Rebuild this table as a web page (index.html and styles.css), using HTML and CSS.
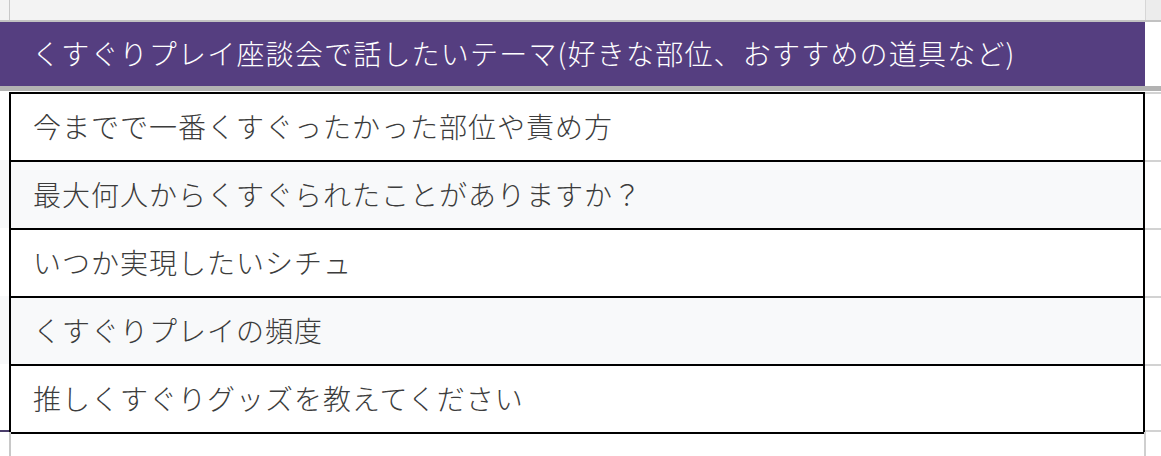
FILE: index.html
```html
<!DOCTYPE html>
<html lang="ja">
<head>
<meta charset="utf-8">
<link rel="stylesheet" href="styles.css">
</head>
<body>
<div class="sheet">
  <div class="topbar">
    <div class="gut-l"></div>
    <div class="top-main"></div>
    <div class="gut-r"></div>
  </div>
  <div class="header">
    <div class="header-main">くすぐりプレイ座談会で話したいテーマ(好きな部位、おすすめの道具など)</div>
    <div class="header-r"></div>
  </div>
  <div class="band"></div>
  <div class="gap"></div>
  <div class="rows">
    <div class="row">
      <div class="gut-l"></div>
      <div class="cell">今までで一番くすぐったかった部位や責め方</div>
      <div class="gut-r"></div>
    </div>
    <div class="row alt">
      <div class="gut-l"></div>
      <div class="cell">最大何人からくすぐられたことがありますか？</div>
      <div class="gut-r"></div>
    </div>
    <div class="row">
      <div class="gut-l"></div>
      <div class="cell">いつか実現したいシチュ</div>
      <div class="gut-r"></div>
    </div>
    <div class="row alt">
      <div class="gut-l"></div>
      <div class="cell">くすぐりプレイの頻度</div>
      <div class="gut-r"></div>
    </div>
    <div class="row last">
      <div class="gut-l"></div>
      <div class="cell">推しくすぐりグッズを教えてください</div>
      <div class="gut-r"></div>
    </div>
  </div>
  <div class="bottom">
    <div class="gut-l"></div>
    <div class="bottom-main"></div>
    <div class="gut-r"></div>
  </div>
</div>
</body>
</html>
```

FILE: styles.css
```css
html, body {
  margin: 0;
  padding: 0;
  background: #ffffff;
}
body {
  width: 1161px;
  height: 456px;
  overflow: hidden;
  font-family: "Noto Sans CJK JP", "Noto Sans", sans-serif;
}
.sheet {
  display: flex;
  flex-direction: column;
  width: 1161px;
}
.topbar {
  display: flex;
  height: 20px;
  background: #f3f3f3;
  border-bottom: 2px solid #c2c2c2;
}
.topbar .gut-l {
  width: 9px;
  border-right: 1px solid #c8c8c8;
}
.topbar .top-main {
  width: 1135px;
}
.topbar .gut-r {
  flex: 1;
  border-left: 1px solid #d6d6d6;
  background: #ececec;
}
.header {
  display: flex;
  height: 64px;
}
.header-main {
  width: 1145px;
  background: #553e80;
  color: #ffffff;
  font-size: 28px;
  font-weight: 300;
  letter-spacing: 1.2px;
  line-height: 62px;
  padding-left: 32px;
  box-sizing: border-box;
  white-space: nowrap;
}
.header-r {
  flex: 1;
  background: #ffffff;
}
.band {
  height: 5px;
  background: #b2b2b2;
}
.gap {
  height: 1px;
}
.rows {
  display: flex;
  flex-direction: column;
}
.row {
  display: flex;
  height: 68px;
}
.row .gut-l {
  width: 9px;
}
.row.alt .gut-l {
  background: #f8f9fa;
}
.row.last .gut-l {
  border-bottom: 2px solid #4b3d6b;
  height: 66px;
}
.cell {
  width: 1136px;
  box-sizing: border-box;
  border: 2px solid #000000;
  border-bottom: none;
  padding-left: 22px;
  padding-bottom: 3px;
  font-size: 28px;
  font-weight: 300;
  letter-spacing: 1px;
  color: #3c3c3c;
  display: flex;
  align-items: center;
  white-space: nowrap;
}
.row.alt .cell {
  background: #f8f9fa;
}
.row.last .cell {
  border-bottom: 2px solid #000000;
  height: 70px;
}
.row .gut-r {
  flex: 1;
  border-top: 2px solid #d2d2d2;
}
.row.last .gut-r {
  border-bottom: 2px solid #d2d2d2;
}
.bottom {
  display: flex;
  height: 30px;
}
.bottom .gut-l {
  width: 9px;
  border-right: 2px solid #c8c8c8;
}
.bottom .bottom-main {
  width: 1133px;
}
.bottom .gut-r {
  flex: 1;
  border-left: 2px solid #cfcfcf;
}
```
